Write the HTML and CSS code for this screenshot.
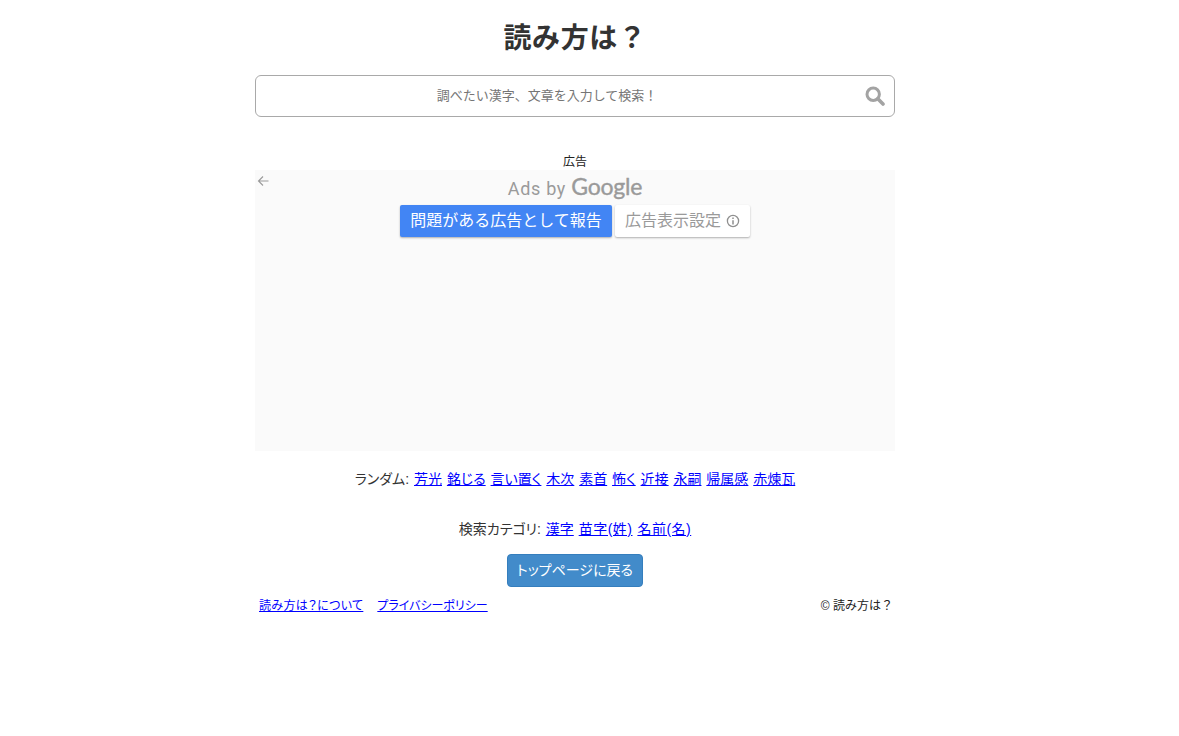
FILE: index.html
```html
<!DOCTYPE html>
<html lang="ja">
<head>
<meta charset="utf-8">
<title>読み方は？</title>
<link rel="stylesheet" href="styles.css">
</head>
<body>
<main class="page">
  <h1 class="title">読み方は？</h1>
  <form class="search">
    <input class="search-input" type="text" placeholder="調べたい漢字、文章を入力して検索！">
    <svg class="search-icon" viewBox="0 0 20 20" width="20" height="20"><circle cx="8.2" cy="8.2" r="6.2" fill="none" stroke="#a3a3a3" stroke-width="3"/><path d="M12.8 12.8L18 18" stroke="#a3a3a3" stroke-width="3.6" stroke-linecap="round"/></svg>
  </form>
  <div class="ad-label">広告</div>
  <section class="ad">
    <svg class="ad-back" viewBox="0 0 12 12" width="12" height="12"><path d="M11.5 6H1.5M6 1.5L1.5 6L6 10.5" fill="none" stroke="#9a9a9a" stroke-width="1.1"/></svg>
    <div class="ad-by">Ads by <span class="ad-google">Google</span></div>
    <div class="ad-buttons">
      <span class="ad-report">問題がある広告として報告</span>
      <span class="ad-settings">広告表示設定
        <svg class="ad-info" viewBox="0 0 14 14" width="14" height="14"><circle cx="7" cy="7" r="5.6" fill="none" stroke="#8f8f8f" stroke-width="1.3"/><path d="M7 6.2V10.4M7 3.6V5" stroke="#8f8f8f" stroke-width="1.5"/></svg>
      </span>
    </div>
  </section>
  <p class="links links-random">ランダム: <a href="#">芳光</a> <a href="#">銘じる</a> <a href="#">言い置く</a> <a href="#">木次</a> <a href="#">素首</a> <a href="#">怖く</a> <a href="#">近接</a> <a href="#">永嗣</a> <a href="#">帰属感</a> <a href="#">赤煉瓦</a></p>
  <p class="links links-cat">検索カテゴリ: <a href="#">漢字</a> <a class="wide" href="#">苗字(姓)</a> <a class="wide" href="#">名前(名)</a></p>
  <div class="back-wrap"><a class="back" href="#">トップページに戻る</a></div>
  <footer class="footer">
    <div class="footer-links"><a class="about" href="#">読み方は？について</a><a href="#">プライバシーポリシー</a></div>
    <div class="copy">© 読み方は？</div>
  </footer>
</main>
</body>
</html>
```
FILE: styles.css
```css
* { box-sizing: border-box; }
body {
  margin: 0;
  background: #fff;
  color: #333;
  font-family: "Liberation Sans", "Noto Sans CJK JP", sans-serif;
  font-size: 14px;
  line-height: 20px;
}
a { color: #00f; text-decoration: underline; }
.page { width: 640px; margin-left: 255px; }
.title {
  margin: 0;
  padding-top: 21px;
  height: 75px;
  line-height: 36px;
  font-size: 28px;
  font-weight: 700;
  letter-spacing: 0.6px;
  text-align: center;
  color: #333;
}
.search { position: relative; height: 42px; }
.search-input {
  display: block;
  width: 100%;
  height: 42px;
  border: 1px solid #a9a9a9;
  border-radius: 6px;
  background: #fff;
  padding: 0 56px 2px 0;
  text-align: center;
  font: 13px "Liberation Sans", "Noto Sans CJK JP", sans-serif;
  outline: none;
}
.search-input::placeholder { color: #757575; opacity: 1; }
.search-icon { position: absolute; right: 10px; top: 11px; }
.ad-label {
  margin-top: 37px;
  height: 16px;
  line-height: 16px;
  font-size: 12px;
  text-align: center;
  color: #222;
}
.ad {
  position: relative;
  height: 281px;
  background: #fafafa;
  text-align: center;
}
.ad-back { position: absolute; left: 2px; top: 5px; }
.ad-by {
  padding-top: 4px;
  height: 35px;
  line-height: 24px;
  font-family: "Roboto", sans-serif;
  font-size: 18px;
  letter-spacing: 0.7px;
  color: #9a9a9a;
}
.ad-google {
  font-family: "Lato", sans-serif;
  font-size: 23px;
  font-weight: 400;
  letter-spacing: -0.2px;
  -webkit-text-stroke: 0.4px #9a9a9a;
}
.ad-buttons { display: flex; justify-content: flex-start; gap: 3px; padding-left: 145px; }
.ad-report, .ad-settings {
  display: flex;
  align-items: center;
  height: 32px;
  font-size: 16px;
  border-radius: 2px;
  box-shadow: 0 1px 2px rgba(0, 0, 0, 0.3);
}
.ad-report { width: 212px; justify-content: center; background: #4285f4; color: #fff; }
.ad-settings { width: 135px; justify-content: center; gap: 5px; background: #fff; color: #9a9a9a; }
.links { margin: 0; text-align: center; color: #333; font-feature-settings: "palt"; word-spacing: 1px; }
.links-random { margin-top: 18px; }
.links-cat { margin-top: 30px; }
.wide { letter-spacing: 0.5px; }
.back-wrap { margin-top: 15px; text-align: center; height: 33px; }
.back {
  display: inline-block;
  height: 33px;
  line-height: 31px;
  padding: 0 9px;
  background: #428bca;
  border: 1px solid #357ebd;
  border-radius: 4px;
  color: #fff;
  text-decoration: none;
  font-feature-settings: "palt";
}
.footer {
  display: flex;
  justify-content: space-between;
  margin-top: 11px;
  padding: 0 2px 0 4px;
  font-size: 12px;
  line-height: 17px;
  color: #222;
}
.footer-links { display: flex; gap: 14px; font-feature-settings: "palt"; }
.about { letter-spacing: 0.35px; }
```
